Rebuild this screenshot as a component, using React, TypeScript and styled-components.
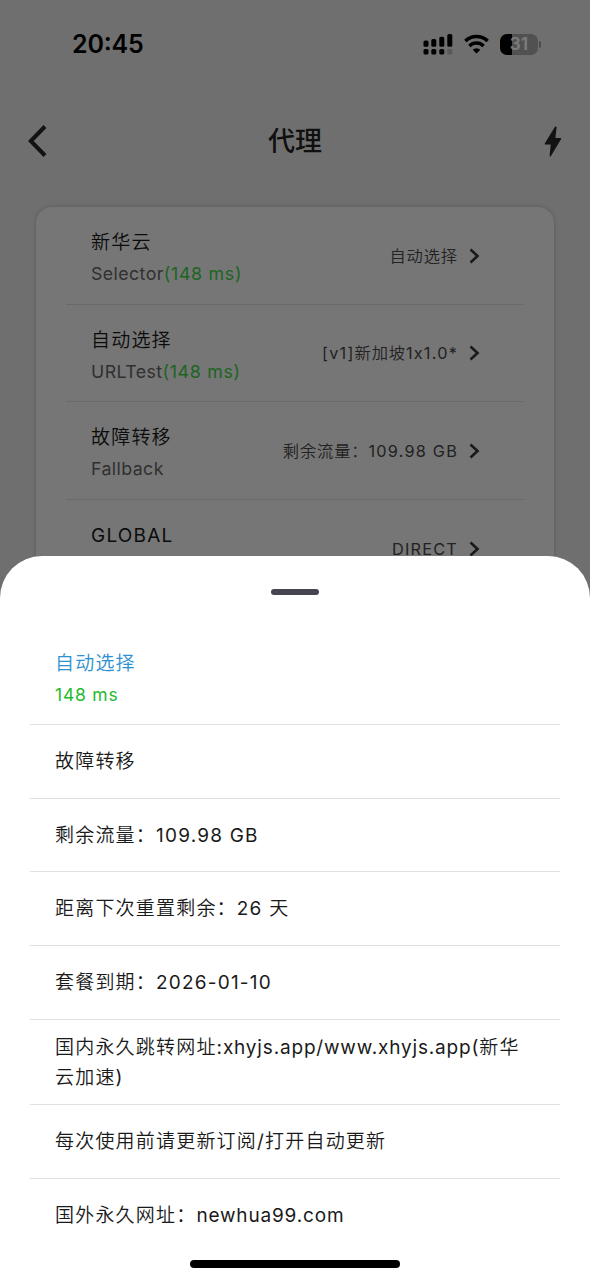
import React from "react";
import styled, { createGlobalStyle } from "styled-components";

const GlobalStyle = createGlobalStyle`
  *, *::before, *::after { box-sizing: border-box; }
  html, body { margin: 0; padding: 0; }
  body {
    font-family: Inter, "Noto Sans CJK SC", sans-serif;
    font-feature-settings: "calt" 0;
    -webkit-font-smoothing: antialiased;
  }
`;

const Screen = styled.div`
  position: relative;
  width: 590px;
  height: 1280px;
  overflow: hidden;
  background: #6f6f6f;
`;

const StatusBar = styled.header`
  display: flex;
  align-items: center;
  justify-content: space-between;
  height: 88px;
  padding: 0 49px 0 72px;
`;

const Clock = styled.time`
  font-size: 25px;
  font-weight: 600;
  line-height: 30px;
  letter-spacing: -0.2px;
  color: #000;
  font-feature-settings: "calt" 1;
`;

const StatusIcons = styled.div`
  display: flex;
  align-items: center;
  gap: 11px;
`;

const Battery = styled.div`
  display: flex;
  align-items: center;
  gap: 1px;
`;

const BatteryBody = styled.div`
  width: 38px;
  height: 21px;
  border-radius: 7px;
  background: linear-gradient(to right, #000 0 12px, #515151 12px);
  color: #7a7a7a;
  font-size: 17px;
  font-weight: 700;
  line-height: 21px;
  text-align: center;
`;

const BatteryTip = styled.div`
  width: 2px;
  height: 7px;
  border-radius: 0 2px 2px 0;
  background: #4b4b4b;
`;

const NavBar = styled.nav`
  display: grid;
  grid-template-columns: 60px 1fr 60px;
  align-items: center;
  height: 106px;
  padding: 0 28px;
`;

const PageTitle = styled.h1`
  margin: 0;
  padding-top: 2px;
  font-size: 27px;
  font-weight: 500;
  line-height: 36px;
  text-align: center;
  color: #101010;
`;

const IconButton = styled.button<{ $end?: boolean }>`
  display: flex;
  justify-content: ${(p) => (p.$end ? "flex-end" : "flex-start")};
  padding: 0;
  border: 0;
  background: none;
  color: #121212;
`;

const Card = styled.section`
  margin: 13px 36px 0;
  padding: 0 30px;
  height: 420px;
  border-radius: 16px;
  background: #767676;
  box-shadow: 0 0 4px rgba(0, 0, 0, 0.2);
`;

const GroupRow = styled.div`
  display: flex;
  align-items: center;
  justify-content: space-between;
  height: 97.6px;
  padding: 0 44px 0 25px;
  border-bottom: 1px solid #6a6a6a;
`;

const GroupText = styled.div`
  padding-top: 7px;
`;

const Latin = styled.span<{ $tight: boolean }>`
  font-weight: 400;
  letter-spacing: ${(p) => (p.$tight ? "0.82px" : "1.2px")};
`;

const GroupName = styled.div`
  font-size: 19px;
  font-weight: 350;
  line-height: 30px;
  letter-spacing: 1.2px;
  color: #0c0c0c;
`;

const GroupType = styled.div`
  font-size: 17.8px;
  line-height: 31px;
  letter-spacing: 0.4px;
  color: #303030;
`;

const Delay = styled.span`
  letter-spacing: 0.7px;
  color: #1b6521;
`;

const Selected = styled.div`
  display: flex;
  align-items: center;
  gap: 11px;
  padding-top: 1px;
  font-size: 16.3px;
  font-weight: 350;
  line-height: 24px;
  letter-spacing: 0.85px;
  color: #222;
`;

const Sheet = styled.section`
  position: absolute;
  left: 0;
  right: 0;
  top: 556px;
  bottom: 0;
  display: flex;
  flex-direction: column;
  align-items: center;
  padding: 33px 30px 12px;
  border-radius: 42px 42px 0 0;
  background: #fff;
`;

const Handle = styled.div`
  flex: none;
  width: 48px;
  height: 6px;
  margin-bottom: 36px;
  border-radius: 3px;
  background: #46444f;
`;

const Options = styled.ul`
  align-self: stretch;
  margin: 0;
  padding: 0;
  list-style: none;
`;

const Option = styled.li<{ $h?: number; $active?: boolean }>`
  display: flex;
  flex-direction: column;
  justify-content: center;
  height: ${(p) => p.$h ?? 73.7}px;
  padding: ${(p) => (p.$h ? 3 : 1)}px 25px 0;
  border-bottom: 1px solid #e0e0e0;
  font-size: 19px;
  font-weight: 350;
  line-height: 30px;
  letter-spacing: 1.2px;
  color: ${(p) => (p.$active ? "#2d90cf" : "#1a1a1a")};
  &:last-child { border-bottom: 0; }
`;

const OptionDelay = styled.span`
  font-size: 17.5px;
  font-weight: 400;
  line-height: 31px;
  letter-spacing: 0.8px;
  color: #25b92d;
`;

const HomeIndicator = styled.div`
  flex: none;
  width: 210px;
  height: 8px;
  margin-top: auto;
  border-radius: 4px;
  background: #000;
`;

const Chevron = () => (
  <svg width="11" height="16" viewBox="0 0 11 16" fill="none" stroke="#1a1a1a" strokeWidth="2.6">
    <path d="M1.500 1.500 8.500 8l-7 6.500" />
  </svg>
);

const BackIcon = () => (
  <svg width="20" height="34" viewBox="0 0 20 34" fill="none" stroke="currentColor" strokeWidth="4">
    <path d="M17 2.500 2.800 17 17 31.500" />
  </svg>
);

const BoltIcon = () => (
  <svg width="18" height="31" viewBox="0 0 18 31" fill="currentColor">
    <path d="M11 .7.900 17.300c-.4.700-.1 1.300.6 1.300h5.200L5.600 30c0 .6.800.8 1.200.2L17 13.200c.4-.700.1-1.300-.7-1.300h-4.900L12.600 1.100c0-.6-1.200-1-1.600-.4Z" />
  </svg>
);

const SignalIcon = () => (
  <svg width="30" height="21" viewBox="0 0 30 21">
    <rect x="0.500" y="6.500" width="5" height="6.300" rx="1.600" />
    <rect x="8.300" y="5" width="5" height="7.800" rx="1.600" />
    <rect x="16.300" y="2.800" width="5" height="10" rx="1.600" />
    <rect x="24.300" y="0" width="5" height="12.800" rx="1.600" />
    <rect x="0.500" y="15" width="5" height="5.500" rx="1.600" />
    <rect x="8.300" y="15" width="5" height="5.500" rx="1.600" />
    <rect x="16.300" y="15" width="5" height="5.500" rx="1.600" />
    <rect x="24.300" y="15" width="5" height="5.500" rx="1.600" fill="#585858" />
  </svg>
);

const WifiIcon = () => (
  <svg width="25" height="20" viewBox="0 0 26 20" fill="none" stroke="#000" strokeWidth="3.600">
    <path d="M1.400 6.900a16.600 16.600 0 0 1 23.200 0" />
    <path d="M5.600 12a10.600 10.600 0 0 1 14.800 0" />
    <path d="M13 20 9 16a5.800 5.800 0 0 1 8 0Z" fill="#000" stroke="none" />
  </svg>
);

/* Sets the Latin runs of a mixed label in their own weight and spacing. */
const Label = ({ text }: { text: string }) => (
  <span>
    {text.split(/([\x20-\x7e]+)/).map((run, i) =>
      i % 2 ? <Latin key={i} $tight={/[a-z]{3}/.test(run)}>{run}</Latin> : run
    )}
  </span>
);

type Group = { name: string; type: string; delay?: string; now: string };

const groups: Group[] = [
  { name: "新华云", type: "Selector", delay: "(148 ms)", now: "自动选择" },
  { name: "自动选择", type: "URLTest", delay: "(148 ms)", now: "[v1]新加坡1x1.0*" },
  { name: "故障转移", type: "Fallback", now: "剩余流量：109.98 GB" },
  { name: "GLOBAL", type: "Selector", now: "DIRECT" },
];

type Proxy = { name: string; delay?: string; height?: number };

const proxies: Proxy[] = [
  { name: "自动选择", delay: "148 ms", height: 94 },
  { name: "故障转移" },
  { name: "剩余流量：109.98 GB" },
  { name: "距离下次重置剩余：26 天" },
  { name: "套餐到期：2026-01-10" },
  { name: "国内永久跳转网址:xhyjs.app/www.xhyjs.app(新华云加速)", height: 85.3 },
  { name: "每次使用前请更新订阅/打开自动更新" },
  { name: "国外永久网址：newhua99.com" },
];

export default function App() {
  return (
    <Screen>
      <GlobalStyle />
      <StatusBar>
        <Clock>20:45</Clock>
        <StatusIcons>
          <SignalIcon />
          <WifiIcon />
          <Battery>
            <BatteryBody>31</BatteryBody>
            <BatteryTip />
          </Battery>
        </StatusIcons>
      </StatusBar>
      <NavBar>
        <IconButton aria-label="返回"><BackIcon /></IconButton>
        <PageTitle>代理</PageTitle>
        <IconButton $end aria-label="测速"><BoltIcon /></IconButton>
      </NavBar>
      <Card>
        {groups.map((g) => (
          <GroupRow key={g.name}>
            <GroupText>
              <GroupName><Label text={g.name} /></GroupName>
              <GroupType>
                {g.type}
                {g.delay && <Delay>{g.delay}</Delay>}
              </GroupType>
            </GroupText>
            <Selected>
              <Label text={g.now} />
              <Chevron />
            </Selected>
          </GroupRow>
        ))}
      </Card>
      <Sheet>
        <Handle />
        <Options>
          {proxies.map((p) => (
            <Option key={p.name} $h={p.height} $active={Boolean(p.delay)}>
              <Label text={p.name} />
              {p.delay && <OptionDelay>{p.delay}</OptionDelay>}
            </Option>
          ))}
        </Options>
        <HomeIndicator />
      </Sheet>
    </Screen>
  );
}
